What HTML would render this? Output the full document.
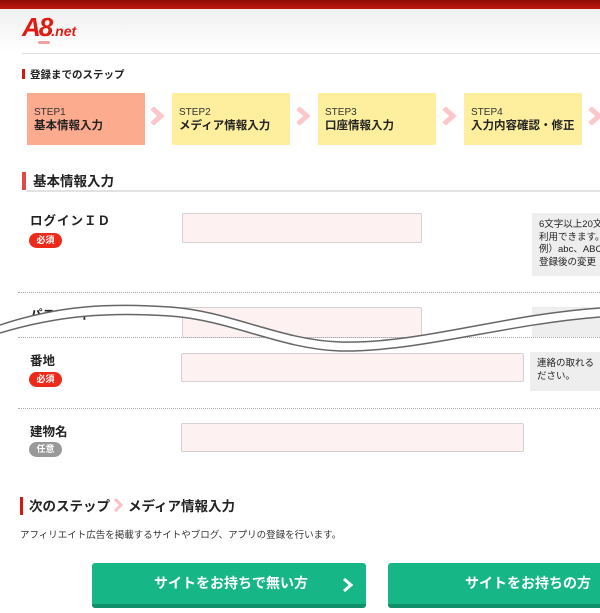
<!DOCTYPE html>
<html><head><meta charset="utf-8"><style>
*{margin:0;padding:0;box-sizing:border-box}
body{width:600px;height:613px;overflow:hidden;background:#fff;font-family:"Liberation Sans","Noto Sans CJK JP",sans-serif;color:#222;position:relative}
.a{position:absolute}
.step{position:absolute;top:93px;width:118px;height:52px;background:#fdef9e;padding:14px 0 0 7px}
.step .s{font-size:10px;color:#333;line-height:12px}
.step .t{font-size:11.5px;font-weight:bold;line-height:15px}
.chev{position:absolute;top:107px;width:14px;height:18px}
.inp{position:absolute;background:#fdf1f1;border:1px solid #d6d0d0;border-radius:2px}
.badge{position:absolute;width:33px;height:15px;border-radius:8px;background:#ee2a1a;color:#fff;font-size:9px;text-align:center;line-height:15px;font-weight:bold}
.lbl{position:absolute;font-size:12.5px;font-weight:bold}
.help{position:absolute;background:#eeeeee;font-size:9.5px;line-height:12.5px;padding:6px 0 0 7px;white-space:nowrap;overflow:hidden}
.dot{position:absolute;left:18px;right:0;border-top:1px dotted #aaa}
.btn{position:absolute;top:563px;height:45px;background:#17b687;border-radius:3px;border-bottom:4px solid #108f68;color:#fff;font-weight:bold;font-size:14px;line-height:41px}
</style></head><body>
<div class="a" style="left:0;top:0;width:600px;height:9px;background:linear-gradient(#8e0a05,#c0190f)"></div>
<div class="a" style="left:0;top:9px;width:600px;height:44px;background:linear-gradient(#f0f0f0,#fff)"></div>
<div class="a" style="left:22px;top:53px;width:578px;height:1px;background:#ddd"></div>
<div class="a" style="left:22px;top:12px;font-size:26px;font-weight:bold;font-style:italic;color:#e01b12;letter-spacing:-2px">A8<span style="font-size:14px;letter-spacing:0">.net</span></div>
<div class="a" style="left:38px;top:41px;width:12px;height:3px;border-radius:2px;background:#f0a0a0"></div>

<div class="a" style="left:22px;top:69px;width:3px;height:10px;background:#d41a10"></div>
<div class="a" style="left:30px;top:67px;font-size:10.5px;font-weight:bold">登録までのステップ</div>

<div class="step" style="left:27px;background:#fdab8e"><div class="s">STEP1</div><div class="t">基本情報入力</div></div>
<div class="step" style="left:172px"><div class="s">STEP2</div><div class="t">メディア情報入力</div></div>
<div class="step" style="left:318px"><div class="s">STEP3</div><div class="t">口座情報入力</div></div>
<div class="step" style="left:464px"><div class="s">STEP4</div><div class="t">入力内容確認・修正</div></div>
<svg class="chev" style="left:150px"><path d="M2 1 L11 9 L2 17" stroke="#fdc6cb" stroke-width="5" fill="none"/></svg>
<svg class="chev" style="left:296px"><path d="M2 1 L11 9 L2 17" stroke="#fdc6cb" stroke-width="5" fill="none"/></svg>
<svg class="chev" style="left:442px"><path d="M2 1 L11 9 L2 17" stroke="#fdc6cb" stroke-width="5" fill="none"/></svg>
<svg class="chev" style="left:588px"><path d="M2 1 L11 9 L2 17" stroke="#fdc6cb" stroke-width="5" fill="none"/></svg>

<div class="a" style="left:22px;top:172px;width:4px;height:18px;background:#e04a44"></div>
<div class="a" style="left:33px;top:170px;font-size:13.5px;font-weight:bold">基本情報入力</div>
<div class="a" style="left:26px;top:190px;width:574px;height:2px;background:#e2e2e2"></div>

<div class="lbl" style="left:30px;top:210px;letter-spacing:1px">ログインＩＤ</div>
<div class="badge" style="left:29px;top:233px">必須</div>
<div class="inp" style="left:182px;top:213px;width:240px;height:30px"></div>
<div class="help" style="left:532px;top:213px;width:68px;height:63px">6文字以上20文<br>利用できます。<br>例）abc、ABC<br>登録後の変更</div>

<div class="dot" style="top:292px"></div>
<div class="lbl" style="left:30px;top:304px">パスワード</div>
<div class="inp" style="left:182px;top:307px;width:240px;height:31px"></div>
<div class="a" style="left:532px;top:307px;width:68px;height:30px;background:#eee"></div>
<div class="dot" style="top:337px"></div>
<svg class="a" style="left:0;top:295px" width="600" height="60"><path d="M0 30 C60 10,110 8,170 12 C230 16,280 45,340 47 C420 49,500 20,600 13 L600 22 C500 30,420 57,340 56 C280 54,230 25,170 21 C110 17,60 20,0 38 Z" fill="#fff"/><path d="M0 30 C60 10,110 8,170 12 C230 16,280 45,340 47 C420 49,500 20,600 13" stroke="#666" stroke-width="1.5" fill="none"/><path d="M0 38 C60 20,110 17,170 21 C230 25,280 54,340 56 C420 57,500 30,600 22" stroke="#666" stroke-width="1.5" fill="none"/></svg>

<div class="lbl" style="left:30px;top:350px">番地</div>
<div class="badge" style="left:29px;top:372px">必須</div>
<div class="inp" style="left:181px;top:353px;width:343px;height:29px"></div>
<div class="help" style="left:530px;top:352px;width:70px;height:39px">連絡の取れる<br>ださい。</div>
<div class="dot" style="top:408px"></div>

<div class="lbl" style="left:30px;top:421px">建物名</div>
<div class="badge" style="left:29px;top:442px;background:#999">任意</div>
<div class="inp" style="left:181px;top:423px;width:343px;height:29px"></div>

<div class="a" style="left:20px;top:497px;width:3px;height:18px;background:#d41a10"></div>
<div class="a" style="left:29px;top:495px;font-size:13.5px;font-weight:bold">次のステップ</div>
<svg class="a" style="left:113px;top:498px" width="10" height="14"><path d="M2 1 L8 7 L2 13" stroke="#fdc0c6" stroke-width="3" fill="none"/></svg>
<div class="a" style="left:128px;top:495px;font-size:13.5px;font-weight:bold">メディア情報入力</div>
<div class="a" style="left:20px;top:527px;font-size:9.5px;color:#333">アフィリエイト広告を掲載するサイトやブログ、アプリの登録を行います。</div>

<div class="btn" style="left:92px;width:274px;padding-left:62px">サイトをお持ちで無い方
<svg class="a" style="left:250px;top:14px" width="12" height="16"><path d="M2 2 L9 8 L2 14" stroke="#fff" stroke-width="3" fill="none"/></svg></div>
<div class="btn" style="left:388px;width:230px;padding-left:77px">サイトをお持ちの方</div>
</body></html>
